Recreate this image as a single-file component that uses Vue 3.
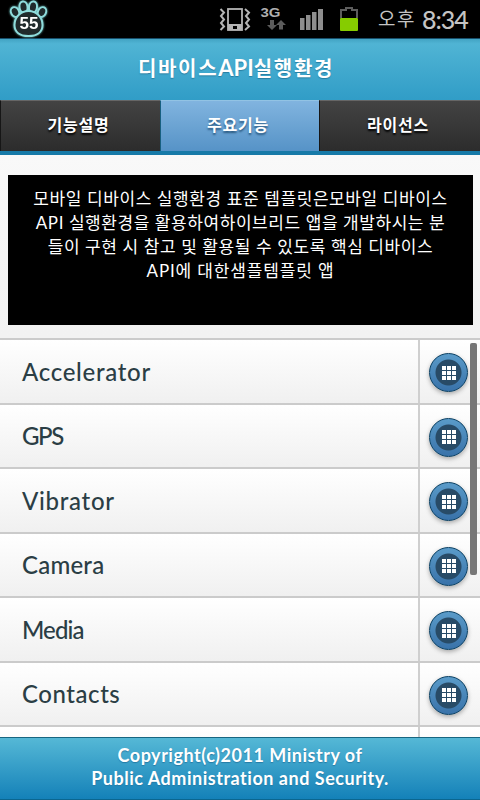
<script setup>
const tabs = [
  { label: '기능설명', active: false },
  { label: '주요기능', active: true },
  { label: '라이선스', active: false },
]
const intro = [
  '모바일 디바이스 실행환경 표준 템플릿은모바일 디바이스',
  'API 실행환경을 활용하여하이브리드 앱을 개발하시는 분',
  '들이 구현 시 참고 및 활용될 수 있도록 핵심 디바이스',
  'API에 대한샘플템플릿 앱',
]
const features = ['Accelerator', 'GPS', 'Vibrator', 'Camera', 'Media', 'Contacts', '']
const cells = [0, 1, 2, 3, 4, 5, 6, 7, 8]
</script>

<template>
  <div class="screen">
    <div class="status">
      <svg class="paw" width="40" height="38" viewBox="0 0 40 38">
        <g fill="#202a2c" stroke="#8fdcdc" stroke-width="2">
          <ellipse cx="6" cy="12" rx="4" ry="5" transform="rotate(-25 6 12)" />
          <ellipse cx="14.500" cy="7" rx="4" ry="5.500" transform="rotate(-8 14.500 7)" />
          <ellipse cx="24" cy="7" rx="4" ry="5.500" transform="rotate(8 24 7)" />
          <ellipse cx="33" cy="12" rx="4" ry="5" transform="rotate(25 33 12)" />
          <path d="M19.500 11C28 11 33.500 18 33.500 25C33.500 32 28 36 19.500 36C11 36 5.500 32 5.500 25C5.500 18 11 11 19.500 11Z" />
        </g>
        <text x="20" y="29" text-anchor="middle" class="count">55</text>
      </svg>
      <svg class="sys" width="142" height="38" viewBox="219 0 142 38">
        <g fill="none" stroke="#b5b5b5" stroke-width="2">
          <path d="M220.500 9L224 12.500L221 16L224 19.500L221 23L224 26.500L220.500 30" />
          <path d="M245 9L249 12.500L246 16L249 19.500L246 23L249 26.500L245 30" />
          <rect x="228" y="9" width="14" height="21" stroke-width="1.800" />
        </g>
        <path d="M228 24H242V30H228Z" fill="#b5b5b5" />
        <rect x="233" y="26" width="4" height="3" fill="#000" />
        <text x="260.500" y="17" class="net" textLength="20" lengthAdjust="spacingAndGlyphs">3G</text>
        <path d="M270 20H274V25H277L272 30L267 25H270ZM279 29.500H283V25H286L281 20L276 25H279Z" fill="#5c5c5c" />
        <g fill="#8e8e8e">
          <rect x="300" y="18" width="4.500" height="12" />
          <rect x="306" y="15" width="4.500" height="15" />
          <rect x="312" y="12" width="4.500" height="18" />
          <rect x="318" y="9" width="5" height="21" />
        </g>
        <path d="M341 18V10H346V8H352V10H357V18" fill="none" stroke="#5d5d5d" stroke-width="2" />
        <rect x="340" y="18" width="18" height="13" rx="1" fill="#86cc00" />
      </svg>
      <div class="clock"><span class="ampm">오후</span><span class="time">8:34</span></div>
    </div>
    <header class="title"><h1>디바이스<span class="api">API</span>실행환경</h1></header>
    <nav class="tabs">
      <div v-for="t in tabs" :key="t.label" class="tab" :class="{ active: t.active }"><span>{{ t.label }}</span></div>
    </nav>
    <main class="content">
      <div class="intro"><p v-for="(line, i) in intro" :key="i"><span>{{ line }}</span></p></div>
      <ul class="list">
        <li v-for="(f, i) in features" :key="i">
          <div class="name"><span :class="f.toLowerCase()">{{ f }}</span></div>
          <div class="action">
            <div v-if="f" class="button">
              <div class="grid"><i v-for="c in cells" :key="c"></i></div>
            </div>
          </div>
        </li>
      </ul>
      <div class="scrollbar"></div>
    </main>
    <footer class="footer">
      <p class="f1">Copyright(c)2011 Ministry of</p>
      <p class="f2">Public Administration and Security.</p>
    </footer>
  </div>
</template>

<style>
body { margin: 0; overflow: hidden; }
</style>

<style scoped>
.screen { width: 480px; height: 800px; overflow: hidden; display: flex; flex-direction: column; font-family: Lato, "Noto Sans CJK KR", sans-serif; background: #f5f5f5; }
.status { height: 38px; flex: none; background: #000; display: flex; align-items: center; }
.paw { margin-left: 9px; filter: drop-shadow(0 0 1px #75cccc); }
.count { font: bold 17px "Liberation Sans", sans-serif; fill: #fff; }
.net { font: bold 13px "Liberation Sans", sans-serif; fill: #b0b0b0; }
.sys { margin-left: 170px; }
.clock { display: flex; align-items: center; margin-left: 17px; color: #c4c4c4; line-height: 38px; }
.ampm { font-size: 19px; width: 44px; letter-spacing: 1.500px; white-space: nowrap; }
.time { font-size: 25px; font-weight: 500; letter-spacing: -1px; }
.title { height: 61px; flex: none; box-sizing: border-box; border-top: 1px solid #174f6c; background: linear-gradient(#42a3c3, #50b4d4 8%, #319dc7); display: flex; justify-content: center; align-items: center; padding-bottom: 3px; padding-right: 8px; }
h1 { margin: 0; font-size: 20px; line-height: 30px; font-weight: 700; color: #fff; letter-spacing: 1.700px; white-space: nowrap; text-shadow: 0 1px 1px #287da0; }
.api { font-size: 22px; letter-spacing: 0; }
.tabs { height: 56px; flex: none; box-sizing: border-box; padding-top: 1px; border-bottom: 4px solid #177aa8; display: grid; grid-template-columns: 160px 159px 161px; background: #319dc7; }
.tab { box-sizing: border-box; border-left: 1px solid #161616; border-top: 1px solid #666; background: linear-gradient(#434343, #2c2c2c); color: #fff; display: flex; align-items: center; justify-content: center; font-size: 16px; letter-spacing: 0.800px; font-weight: 700; padding-bottom: 4px; padding-right: 4px; text-shadow: 0 2px 2px #000; }
.tab.active { background: linear-gradient(#81b4df, #5693c7); border-color: #175f80; border-top-color: #92c3e4; text-shadow: 0 2px 2px #2a5980; }
.content { height: 582px; flex: none; overflow: hidden; position: relative; background: linear-gradient(#f9f9f9, #f2f2f2 180px); }
.intro { margin: 20px 7px 13px 8px; height: 150px; box-sizing: border-box; padding-top: 12px; background: #000; color: #fff; text-align: center; font-size: 17px; }
.intro p { margin: 0; height: 24px; line-height: 24px; white-space: nowrap; }
.intro span { letter-spacing: 0.600px; }
.intro p:nth-child(2) span { letter-spacing: 0.570px; }
.intro p:nth-child(4) span { letter-spacing: 0.850px; }
.list { margin: 0; padding: 0; list-style: none; }
.list li { height: 64.500px; box-sizing: border-box; border-top: 2px solid #cbcbcb; display: flex; background: linear-gradient(#fff, #f0f0f0) padding-box; }
.name { width: 418px; box-sizing: border-box; padding-left: 22px; display: flex; align-items: center; font-size: 24px; font-weight: 500; color: #2b3e45; flex: none; }
.accelerator { letter-spacing: 0.700px; }
.gps { letter-spacing: -1.400px; }
.vibrator { letter-spacing: 0.700px; }
.camera { letter-spacing: 0.200px; }
.media { letter-spacing: -0.900px; }
.contacts { letter-spacing: 0.550px; }
.action { flex: 1; border-left: 2px solid #cfcfcf; display: flex; align-items: center; padding-left: 9px; padding-top: 3px; }
.button { width: 39px; height: 39px; box-sizing: border-box; border: 1px solid #083e61; border-radius: 50%; background: radial-gradient(circle, #284b67 0 12.500px, transparent 13.500px), linear-gradient(#5a9bc9, #3972a9); box-shadow: 0 2px 4px #aaa; display: flex; align-items: center; justify-content: center; }
.grid { display: grid; grid-template-columns: repeat(3, 4px); gap: 1px; }
.grid i { width: 4px; height: 4px; background: #fff; }
.scrollbar { position: absolute; left: 470px; top: 188px; width: 7px; height: 232px; border-radius: 2px; background: #777; }
.footer { height: 63px; flex: none; box-sizing: border-box; border-top: 1px solid #176681; border-bottom: 1px solid #0b668f; background: linear-gradient(#55b8d6, #1481b8); color: #fff; font-size: 18px; font-weight: 700; text-align: center; padding-top: 6px; }
.footer p { margin: 0; height: 23px; line-height: 23px; white-space: nowrap; letter-spacing: 0.520px; text-shadow: 0 1px 1px #267ba5; }
</style>
